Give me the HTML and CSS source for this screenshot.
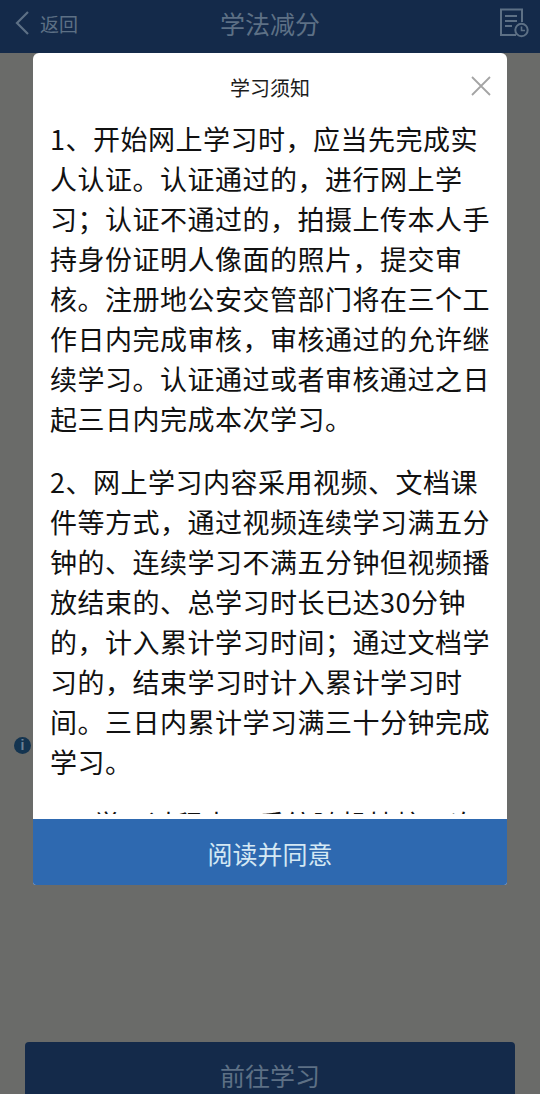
FILE: index.html
```html
<!DOCTYPE html>
<html lang="zh-CN">
<head>
    <meta charset="UTF-8">
    <meta name="viewport" content="width=device-width, initial-scale=1.0">
    <title>学法减分</title>
    <link rel="stylesheet" href="styles.css">
</head>
<body>

<div class="page">
    <header class="nav">
        <div class="nav-back">
            <svg class="back-icon" viewBox="0 0 16 26" width="16" height="26">
                <path d="M14 2 L3 13 L14 24" fill="none" stroke="currentColor" stroke-width="2.2"/>
            </svg>
            <span>返回</span>
        </div>
        <div class="nav-title">学法减分</div>
        <svg class="nav-record" viewBox="0 0 30 30" width="30" height="30">
            <path d="M17 27 H2 V1.5 H23 V14" fill="none" stroke="currentColor" stroke-width="2"/>
            <path d="M6 8 H18 M6 13 H18 M6 18 H13" fill="none" stroke="currentColor" stroke-width="2"/>
            <circle cx="22.5" cy="22" r="6.2" fill="none" stroke="currentColor" stroke-width="2"/>
            <path d="M22.5 18.5 V22.5 H26" fill="none" stroke="currentColor" stroke-width="1.6"/>
        </svg>
    </header>

    <main class="content">
        <div class="start-btn">前往学习</div>
    </main>

    <div class="info-dot">i</div>

    <section class="modal">
        <div class="modal-head">
            <span>学习须知</span>
            <svg class="modal-close" viewBox="0 0 20 20" width="20" height="20">
                <path d="M1 1 L19 19 M19 1 L1 19" fill="none" stroke="currentColor" stroke-width="1.8"/>
            </svg>
        </div>
        <div class="modal-body">
            <p>1、开始网上学习时，应当先完成实人认证。认证通过的，进行网上学习；认证不通过的，拍摄上传本人手持身份证明人像面的照片，提交审核。注册地公安交管部门将在三个工作日内完成审核，审核通过的允许继续学习。认证通过或者审核通过之日起三日内完成本次学习。</p>
            <p>2、网上学习内容采用视频、文档课件等方式，通过视频连续学习满五分钟的、连续学习不满五分钟但视频播放结束的、总学习时长已达30分钟的，计入累计学习时间；通过文档学习的，结束学习时计入累计学习时间。三日内累计学习满三十分钟完成学习。</p>
            <p>3、学习过程中，系统随机抽校一次</p>
        </div>
        <div class="modal-btn">阅读并同意</div>
    </section>
</div>

</body>
</html>
```

FILE: styles.css
```css
* {
    box-sizing: border-box;
}

body {
    margin: 0;
    font-family: "Noto Sans CJK SC", "Liberation Sans", sans-serif;
    background-color: #6a6b69;
}

.page {
    position: relative;
    width: 540px;
    height: 1094px;
    overflow: hidden;
    display: flex;
    flex-direction: column;
}

.nav {
    height: 53px;
    padding: 0 11px 7px;
    display: grid;
    grid-template-columns: 1fr auto 1fr;
    align-items: center;
    background-color: #142a4a;
    color: #5d7085;
}

.nav-back {
    padding-left: 3px;
    display: flex;
    align-items: center;
    gap: 10px;
    font-size: 19px;
}

.nav-title {
    font-size: 25px;
}

.nav-record {
    justify-self: end;
}

.content {
    flex: 1;
    padding: 0 25px;
    display: flex;
    align-items: flex-end;
}

.start-btn {
    width: 100%;
    height: 52px;
    border-radius: 4px 4px 0 0;
    background-color: #142a4a;
    color: #5d7085;
    font-size: 25px;
    line-height: 66px;
    text-align: center;
}

.info-dot {
    position: absolute;
    left: 14px;
    top: 737px;
    width: 17px;
    height: 17px;
    border-radius: 50%;
    background-color: #143450;
    color: #6c8296;
    font-family: "Liberation Sans", sans-serif;
    font-size: 14px;
    font-weight: bold;
    line-height: 17px;
    text-align: center;
}

.modal {
    position: absolute;
    left: 33px;
    top: 53px;
    width: 474px;
    height: 832px;
    border-radius: 6px 6px 3px 3px;
    overflow: hidden;
    display: flex;
    flex-direction: column;
    background-color: #fff;
}

.modal-head {
    position: relative;
    height: 58px;
    padding-top: 21px;
    text-align: center;
    font-size: 20px;
    line-height: 28px;
    color: #1c1c1c;
}

.modal-close {
    position: absolute;
    right: 16px;
    top: 23px;
    color: #a4a4a4;
}

.modal-body {
    flex: 1;
    overflow: hidden;
    margin-bottom: 5px;
    padding: 8px 17px 0 17px;
    font-size: 27px;
    letter-spacing: 0.5px;
    line-height: 40px;
    color: #111;
}

.modal-body p {
    margin: 0 0 22.5px;
}

.modal-btn {
    height: 66px;
    flex-shrink: 0;
    background-color: #2e69b0;
    color: #d4e8f4;
    font-size: 25px;
    line-height: 68px;
    text-align: center;
}
```
